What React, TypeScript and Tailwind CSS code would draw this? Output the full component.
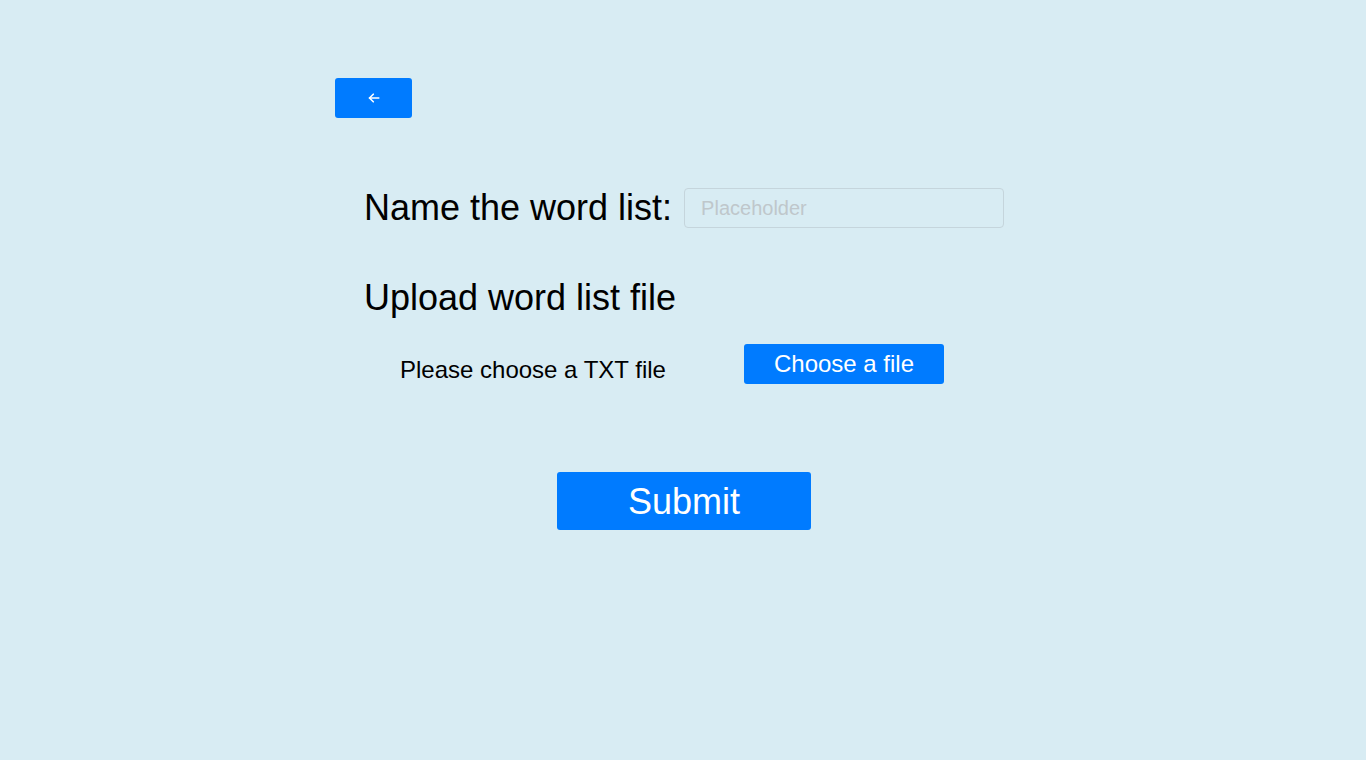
export default function App() {
  return (
    <div className="min-h-screen bg-[#d8ecf3] text-black font-['Liberation_Sans',Arial,sans-serif]">
      <div className="w-[696px] mx-auto pt-[78px]">
        <button
          aria-label="Back"
          className="w-[77px] h-10 flex items-center justify-center bg-[#007bff] rounded-[3px]"
        >
          <svg width="12" height="12" viewBox="0 0 12 12" fill="none" stroke="white" strokeWidth="1.6" strokeLinecap="round" strokeLinejoin="round">
            <path d="M10.8 6H1.5" />
            <path d="M5.3 2.2L1.5 6l3.8 3.8" />
          </svg>
        </button>

        <div className="pl-[29px] mt-[69px]">
          <div className="flex items-center gap-[12px]">
            <label className="text-[36px] leading-[41px]">Name the word list:</label>
            <input
              type="text"
              placeholder="Placeholder"
              className="w-[320px] h-10 px-4 pt-[2px] text-[20px] bg-transparent border border-[#c5d5dc] rounded-[4px] placeholder:text-[#bfc7cb] focus:outline-none"
            />
          </div>

          <h2 className="mt-[49px] text-[36px] leading-[41px]">Upload word list file</h2>

          <div className="mt-[26px] pl-[36px] flex items-start">
            <span className="w-[344px] mt-[12px] text-[24px] leading-[28px]">Please choose a TXT file</span>
            <button className="w-[200px] h-10 bg-[#007bff] text-white text-[24px] leading-[28px] rounded-[3px]">
              Choose a file
            </button>
          </div>
        </div>

        <div className="mt-[88px] flex justify-center">
          <button className="w-[254px] h-[58px] ml-[2px] bg-[#007bff] text-white text-[36px] leading-[41px] rounded-[3px]">
            Submit
          </button>
        </div>
      </div>
    </div>
  )
}
